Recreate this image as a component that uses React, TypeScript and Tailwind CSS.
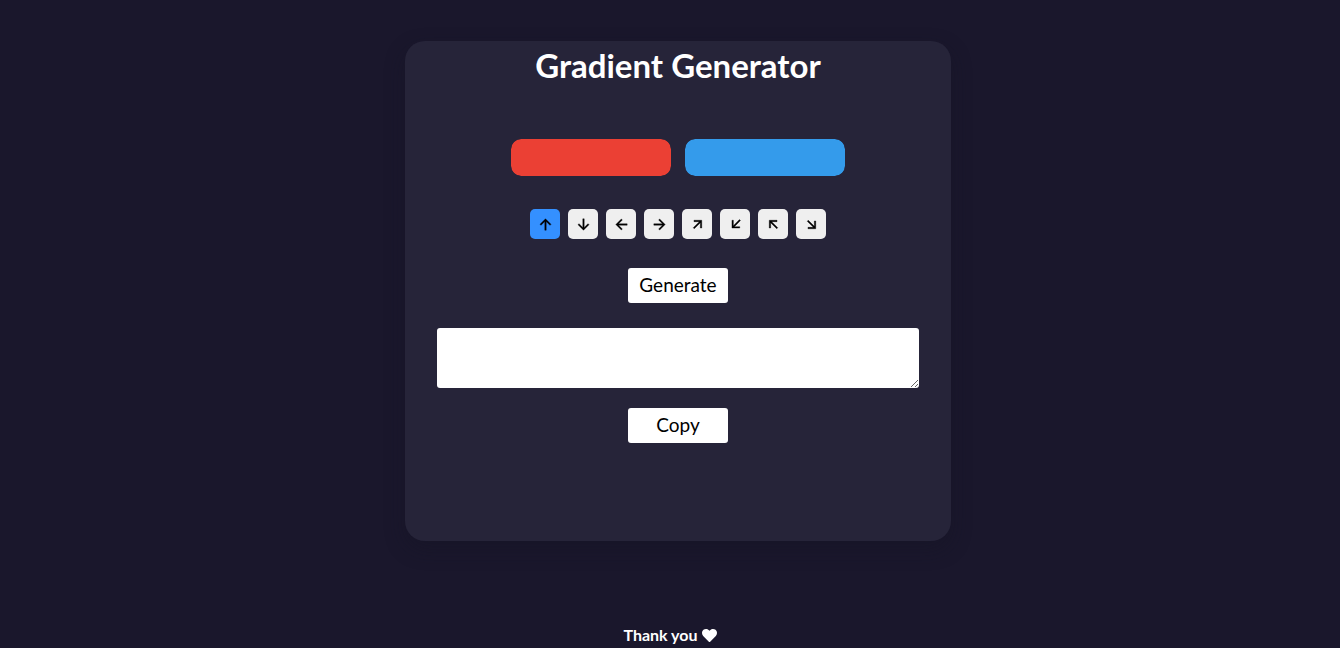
import { useState } from "react";
import {
  RiArrowUpLine,
  RiArrowDownLine,
  RiArrowLeftLine,
  RiArrowRightLine,
  RiArrowRightUpLine,
  RiArrowLeftDownLine,
  RiArrowLeftUpLine,
  RiArrowRightDownLine,
} from "react-icons/ri";
import { FaHeart } from "react-icons/fa";

const directions = [
  { value: "to top", Icon: RiArrowUpLine },
  { value: "to bottom", Icon: RiArrowDownLine },
  { value: "to left", Icon: RiArrowLeftLine },
  { value: "to right", Icon: RiArrowRightLine },
  { value: "to top right", Icon: RiArrowRightUpLine },
  { value: "to bottom left", Icon: RiArrowLeftDownLine },
  { value: "to top left", Icon: RiArrowLeftUpLine },
  { value: "to bottom right", Icon: RiArrowRightDownLine },
];

const swatch =
  "h-[37px] w-40 cursor-pointer appearance-none rounded-[10px] border-0 p-0 [&::-webkit-color-swatch-wrapper]:p-0 [&::-webkit-color-swatch]:rounded-[10px] [&::-webkit-color-swatch]:border-0";
const action =
  "h-[35px] w-[100px] cursor-pointer rounded-[3px] bg-white pb-0.5 text-[19px] leading-none text-black";

export default function App() {
  const [from, setFrom] = useState("#eb4034");
  const [to, setTo] = useState("#349beb");
  const [direction, setDirection] = useState("to top");
  const [code, setCode] = useState("");

  return (
    <div className="flex min-h-screen flex-col items-center justify-between bg-[#1a172c] pt-[41px] font-['Lato',sans-serif] text-white">
      <main className="ml-4 flex min-h-[500px] w-full max-w-[546px] flex-col items-center rounded-[20px] bg-[#262439] px-8 shadow-[0_8px_20px_rgba(20,20,36,0.4)]">
        <h1 className="text-[33px] leading-[48px] font-bold">Gradient Generator</h1>
        <div className="mt-[50px] flex gap-3.5">
          <input
            type="color"
            aria-label="First color"
            className={swatch}
            value={from}
            onChange={(e) => setFrom(e.target.value)}
          />
          <input
            type="color"
            aria-label="Second color"
            className={swatch}
            value={to}
            onChange={(e) => setTo(e.target.value)}
          />
        </div>
        <div className="mt-[33px] flex gap-2">
          {directions.map(({ value, Icon }) => (
            <button
              key={value}
              type="button"
              aria-label={value}
              aria-pressed={direction === value}
              onClick={() => setDirection(value)}
              className={
                direction === value
                  ? "flex size-[30px] items-center justify-center rounded-[5px] bg-[#3490ff] text-black"
                  : "flex size-[30px] items-center justify-center rounded-[5px] bg-[#efefef] text-black"
              }
            >
              <Icon className="size-[17px] stroke-current [stroke-width:0.5]" />
            </button>
          ))}
        </div>
        <button
          type="button"
          className={`mt-[29px] ${action}`}
          onClick={() => setCode(`background-image: linear-gradient(${direction}, ${from}, ${to});`)}
        >
          Generate
        </button>
        <textarea
          aria-label="Gradient CSS"
          className="mt-[25px] h-[60px] w-full resize rounded-[3px] bg-white p-2 text-base text-black outline-none"
          value={code}
          onChange={(e) => setCode(e.target.value)}
        />
        <button
          type="button"
          className={`mt-5 ${action}`}
          onClick={() => navigator.clipboard?.writeText(code)}
        >
          Copy
        </button>
      </main>
      <footer className="flex items-center gap-1 pb-0.5 text-[16px] leading-[22px] font-bold">
        Thank you <FaHeart className="size-[15px]" />
      </footer>
    </div>
  );
}
